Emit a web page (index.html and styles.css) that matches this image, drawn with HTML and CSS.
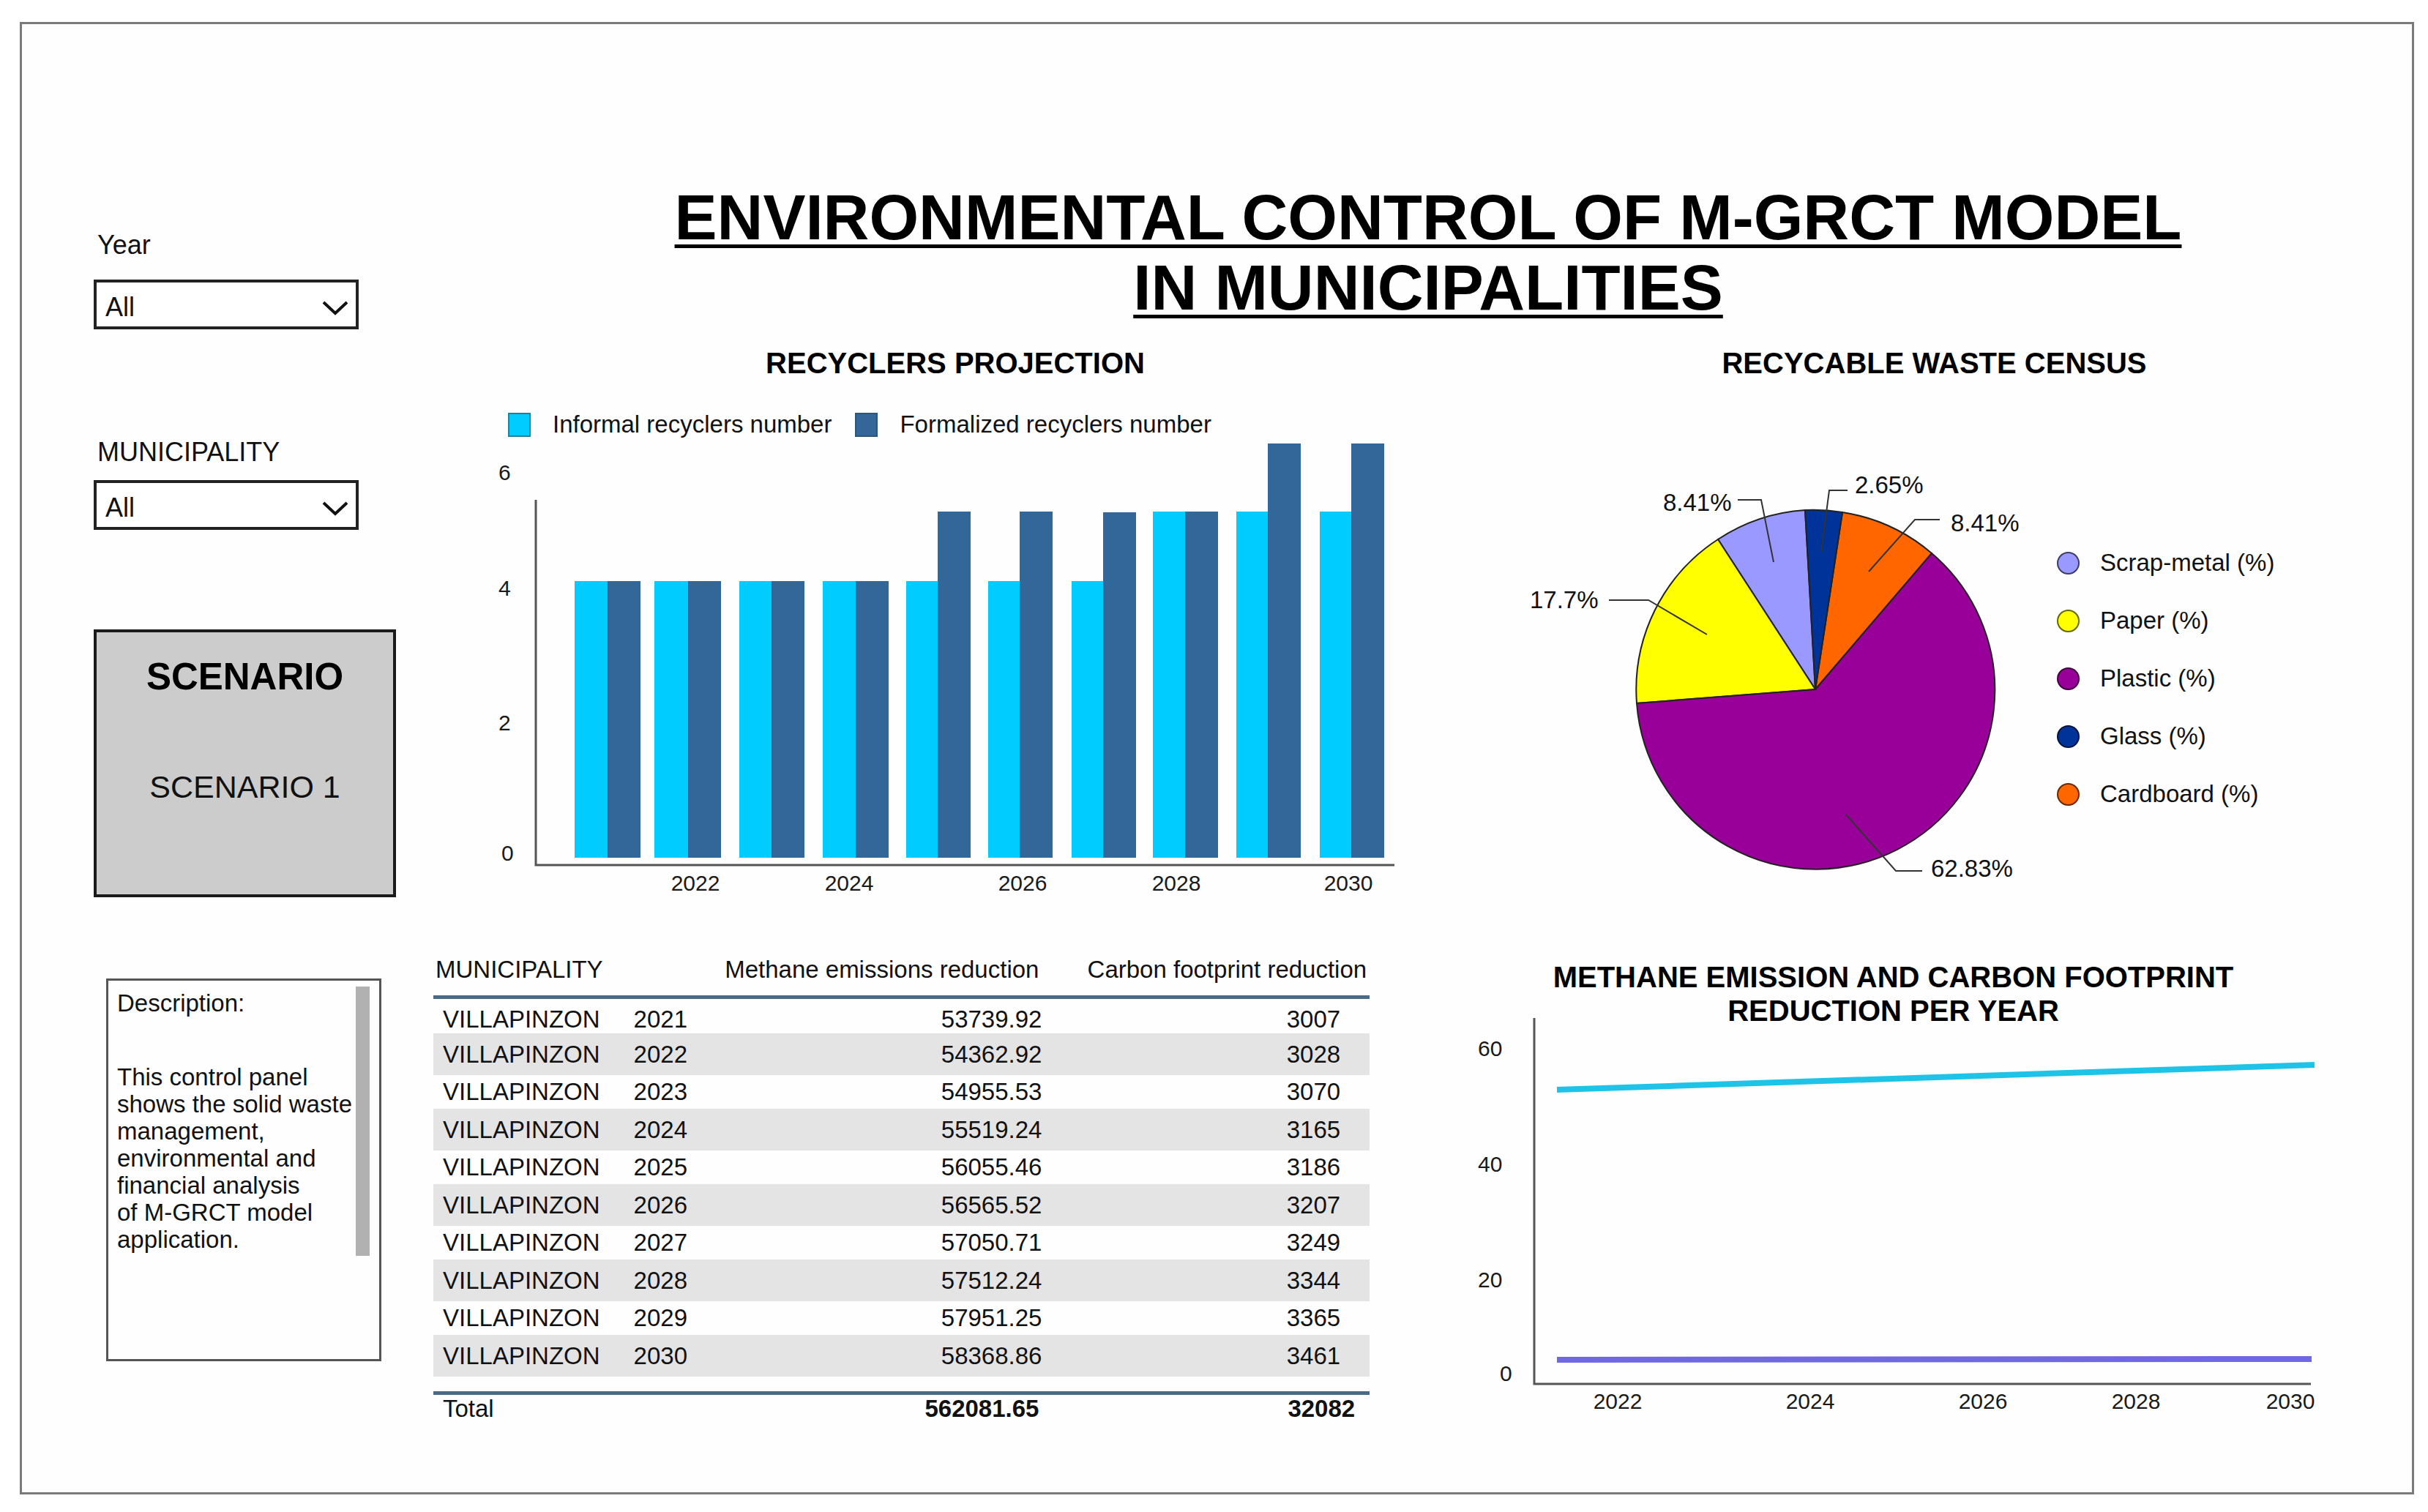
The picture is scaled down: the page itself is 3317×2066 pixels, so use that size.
FILE: index.html
```html
<!DOCTYPE html>
<html lang="en">
<head>
  <meta charset="UTF-8">
  <title>Environmental control of M-GRCT model</title>
  <link rel="stylesheet" href="styles.css">
</head>
<body>
  <main class="panel">
    <aside class="sidebar">
      <div class="filter filter-year">
        <label for="year">Year</label>
        <div class="select-box">
          <select id="year" name="year"><option>All</option></select>
          <svg class="chevron" viewBox="0 0 36 20"><path d="M2 2 L18 17 L34 2"/></svg>
        </div>
      </div>
      <div class="filter">
        <label for="municipality">MUNICIPALITY</label>
        <div class="select-box">
          <select id="municipality" name="municipality"><option>All</option></select>
          <svg class="chevron" viewBox="0 0 36 20"><path d="M2 2 L18 17 L34 2"/></svg>
        </div>
      </div>

      <section class="scenario">
        <h2>SCENARIO</h2>
        <p>SCENARIO 1</p>
      </section>

      <section class="description">
        <div class="description-text">
          <p>Description:</p>
          <p>This control panel shows the solid waste management, environmental and financial analysis<br>of M-GRCT model application.</p>
        </div>
        <div class="scroll-thumb"></div>
      </section>
    </aside>

    <h1>ENVIRONMENTAL CONTROL OF M-GRCT MODEL<br>IN MUNICIPALITIES</h1>

    <div class="column">
      <section class="recyclers">
        <h2>RECYCLERS PROJECTION</h2>
        <ul class="bar-legend">
          <li><span class="swatch informal"></span>Informal recyclers number</li>
          <li><span class="swatch formalized"></span>Formalized recyclers number</li>
        </ul>
        <svg class="chart" viewBox="0 0 1370 626">
          <g class="bar-informal">
            <rect x="165" y="195" width="45" height="378"/>
            <rect x="274" y="195" width="46" height="378"/>
            <rect x="390" y="195" width="44" height="378"/>
            <rect x="504" y="195" width="45" height="378"/>
            <rect x="618" y="195" width="44" height="378"/>
            <rect x="730" y="195" width="44" height="378"/>
            <rect x="844" y="195" width="44" height="378"/>
            <rect x="955" y="100" width="45" height="473"/>
            <rect x="1069" y="100" width="44" height="473"/>
            <rect x="1183" y="100" width="44" height="473"/>
          </g>
          <g class="bar-formalized">
            <rect x="210" y="195" width="45" height="378"/>
            <rect x="320" y="195" width="45" height="378"/>
            <rect x="434" y="195" width="45" height="378"/>
            <rect x="549" y="195" width="45" height="378"/>
            <rect x="661" y="100" width="45" height="473"/>
            <rect x="773" y="100" width="45" height="473"/>
            <rect x="887" y="101" width="45" height="472"/>
            <rect x="999" y="100" width="45" height="473"/>
            <rect x="1112" y="7" width="45" height="566"/>
            <rect x="1226" y="7" width="45" height="566"/>
          </g>
          <path class="axis" d="M112 84 V583 H1285"/>
          <g class="tick">
            <text x="61" y="57">6</text>
            <text x="61" y="215">4</text>
            <text x="61" y="399">2</text>
            <text x="65" y="577">0</text>
          </g>
          <g class="tick tick-x">
            <text x="330" y="618">2022</text>
            <text x="540" y="618">2024</text>
            <text x="777" y="618">2026</text>
            <text x="987" y="618">2028</text>
            <text x="1222" y="618">2030</text>
          </g>
        </svg>
      </section>

      <table class="reduction">
        <colgroup>
          <col class="col-name">
          <col class="col-year">
          <col class="col-methane">
          <col class="col-carbon">
        </colgroup>
        <thead>
          <tr><th>MUNICIPALITY</th><th></th><th>Methane emissions reduction</th><th>Carbon footprint reduction</th></tr>
        </thead>
        <tbody>
          <tr><td>VILLAPINZON</td><td>2021</td><td>53739.92</td><td>3007</td></tr>
          <tr><td>VILLAPINZON</td><td>2022</td><td>54362.92</td><td>3028</td></tr>
          <tr><td>VILLAPINZON</td><td>2023</td><td>54955.53</td><td>3070</td></tr>
          <tr><td>VILLAPINZON</td><td>2024</td><td>55519.24</td><td>3165</td></tr>
          <tr><td>VILLAPINZON</td><td>2025</td><td>56055.46</td><td>3186</td></tr>
          <tr><td>VILLAPINZON</td><td>2026</td><td>56565.52</td><td>3207</td></tr>
          <tr><td>VILLAPINZON</td><td>2027</td><td>57050.71</td><td>3249</td></tr>
          <tr><td>VILLAPINZON</td><td>2028</td><td>57512.24</td><td>3344</td></tr>
          <tr><td>VILLAPINZON</td><td>2029</td><td>57951.25</td><td>3365</td></tr>
          <tr><td>VILLAPINZON</td><td>2030</td><td>58368.86</td><td>3461</td></tr>
        </tbody>
        <tfoot>
          <tr><td>Total</td><td></td><td>562081.65</td><td>32082</td></tr>
        </tfoot>
      </table>
    </div>

    <div class="column">
      <section class="waste">
        <h2>RECYCABLE WASTE CENSUS</h2>
        <div class="pie">
          <svg class="chart" viewBox="0 0 820 580">
            <g class="slices">
              <path class="scrap" d="M490 302 L357 97 A245 245 0 0 1 476 57 Z"/>
              <path class="paper" d="M490 302 L246 321 A245 245 0 0 1 357 97 Z"/>
              <path class="cardboard" d="M490 302 L527 60 A245 245 0 0 1 649 116 Z"/>
              <path class="plastic" d="M490 302 L649 116 A245 245 0 1 1 246 321 Z"/>
              <path class="glass" d="M490 302 L476 57 A245 245 0 0 1 527 60 Z"/>
            </g>
            <g class="leaders">
              <path d="M384 43 H416 L433 128"/>
              <path d="M534 30 H509 L498 114"/>
              <path d="M660 70 H626 L563 141"/>
              <path d="M208 180 H262 L342 227"/>
              <path d="M532 473 L600 550 H636"/>
            </g>
            <g class="pie-label">
              <text x="282" y="58">8.41%</text>
              <text x="544" y="34">2.65%</text>
              <text x="675" y="86">8.41%</text>
              <text x="100" y="191">17.7%</text>
              <text x="648" y="558">62.83%</text>
            </g>
          </svg>
          <ul class="pie-legend">
            <li><span class="dot dot-scrap"></span>Scrap-metal (%)</li>
            <li><span class="dot dot-paper"></span>Paper (%)</li>
            <li><span class="dot dot-plastic"></span>Plastic (%)</li>
            <li><span class="dot dot-glass"></span>Glass (%)</li>
            <li><span class="dot dot-cardboard"></span>Cardboard (%)</li>
          </ul>
        </div>
      </section>

      <section class="emission">
        <h2>METHANE EMISSION AND CARBON FOOTPRINT<br>REDUCTION PER YEAR</h2>
        <svg class="chart" viewBox="0 0 1305 560">
          <path class="axis" d="M106 11 V511 H1167"/>
          <path class="line-methane" d="M137 109 L1172 75"/>
          <path class="line-carbon" d="M137 478 L1168 477"/>
          <g class="tick">
            <text x="29" y="63">60</text>
            <text x="29" y="221">40</text>
            <text x="29" y="379">20</text>
            <text x="59" y="507">0</text>
          </g>
          <g class="tick tick-x">
            <text x="220" y="545">2022</text>
            <text x="483" y="545">2024</text>
            <text x="719" y="545">2026</text>
            <text x="928" y="545">2028</text>
            <text x="1139" y="545">2030</text>
          </g>
        </svg>
      </section>
    </div>
  </main>
</body>
</html>
```

FILE: styles.css
```css
* {
  box-sizing: border-box;
}
body {
  margin: 0;
  background-color: #fff;
  color: #111;
  font-family: "Liberation Sans", Arial, sans-serif;
  font-size: 33px;
  line-height: 38px;
}
h1, h2, p, ul {
  margin: 0;
  padding: 0;
}
ul {
  list-style: none;
}
.panel {
  display: grid;
  grid-template-columns: minmax(0, 562fr) minmax(0, 1398fr) minmax(0, 1305fr);
  grid-template-rows: auto 1fr;
  min-height: calc(100vh - 54px);
  margin: 30px 19px 24px 27px;
  padding-top: 216px;
  border: 3px solid #7a7a7a;
  background-color: #fefefe;
}
h1 {
  grid-column: 2 / 4;
  padding-left: 15px;
  color: #000;
  font-size: 87px;
  line-height: 96px;
  text-align: center;
  text-decoration: underline;
  text-decoration-thickness: 5px;
  text-underline-offset: 7px;
  text-decoration-skip-ink: none;
}
h2 {
  color: #000;
  font-size: 40px;
  line-height: 46px;
  text-align: center;
}
.column {
  padding-top: 32px;
}
.chart {
  display: block;
  width: 100%;
  overflow: visible;
}

/* left side: filters, scenario and description */
.sidebar {
  grid-row: 1 / 3;
  padding: 65px 0 0 98px;
}
.filter {
  width: 78%;
  margin-bottom: 147px;
}
.filter label {
  display: block;
  margin-bottom: 17px;
  padding-left: 5px;
  font-size: 36px;
  line-height: 42px;
}
.filter-year label {
  margin-bottom: 26px;
}
.select-box {
  position: relative;
}
.select-box select {
  display: block;
  width: 100%;
  height: 68px;
  padding: 6px 12px 0;
  border: 4px solid #222;
  border-radius: 0;
  background-color: #fff;
  color: #111;
  font-family: inherit;
  font-size: 36px;
  appearance: none;
}
.chevron {
  position: absolute;
  top: 29px;
  right: 14px;
  width: 36px;
  height: 20px;
  fill: none;
  stroke: #111;
  stroke-width: 4;
  pointer-events: none;
}
.scenario {
  width: 89%;
  min-height: 366px;
  margin-top: -11px;
  padding-top: 32px;
  border: 4px solid #1a1a1a;
  background-color: #ccc;
  text-align: center;
}
.scenario h2 {
  font-size: 51px;
  line-height: 58px;
}
.scenario p {
  margin-top: 96px;
  font-size: 43px;
  line-height: 50px;
}
.description {
  display: flex;
  width: 81%;
  min-height: 523px;
  margin: 111px 0 0 17px;
  padding: 8px 13px 8px 12px;
  border: 3px solid #555;
  line-height: 37px;
}
.description-text {
  flex: 1;
  padding-top: 4px;
}
.description-text p + p {
  margin-top: 64px;
}
.scroll-thumb {
  width: 19px;
  height: 368px;
  background-color: #b1b1b1;
}

/* charts */
.axis {
  fill: none;
  stroke: #555;
  stroke-width: 3;
}
.tick {
  fill: #1a1a1a;
  font-size: 30px;
}
.tick-x {
  text-anchor: middle;
}
.recyclers {
  padding-left: 28px;
}
.bar-legend {
  display: flex;
  gap: 32px;
  margin: 42px 0 0 74px;
}
.bar-legend li {
  display: flex;
  align-items: center;
  gap: 30px;
}
.swatch {
  width: 31px;
  height: 33px;
  border: 2px solid #2b7d9c;
}
.informal {
  background-color: #0cf;
}
.formalized {
  border-color: #2d5678;
  background-color: #369;
}
.bar-informal {
  fill: #0cf;
}
.bar-formalized {
  fill: #369;
}
.pie {
  display: grid;
  grid-template-columns: 820fr 485fr;
  margin-top: 121px;
}
.slices {
  stroke: #222;
  stroke-width: 2;
}
.scrap {
  fill: #99f;
}
.paper {
  fill: #ff0;
}
.plastic {
  fill: #909;
}
.glass {
  fill: #039;
}
.cardboard {
  fill: #f60;
}
.leaders {
  fill: none;
  stroke: #333;
  stroke-width: 2;
}
.pie-label {
  fill: #111;
  font-size: 33px;
}
.pie-legend {
  display: flex;
  flex-direction: column;
  gap: 41px;
  padding-top: 110px;
}
.pie-legend li {
  display: flex;
  align-items: center;
  gap: 28px;
}
.dot {
  width: 31px;
  height: 31px;
  border: 2px solid rgba(0, 0, 0, 0.6);
  border-radius: 50%;
}
.dot-scrap {
  background-color: #99f;
}
.dot-paper {
  background-color: #ff0;
}
.dot-plastic {
  background-color: #909;
}
.dot-glass {
  background-color: #039;
}
.dot-cardboard {
  background-color: #f60;
}
.emission {
  margin-top: 92px;
}
.emission h2 {
  padding-right: 112px;
}
/* the axis starts beside the second line of the title */
.emission .chart {
  margin-top: -24px;
}
.line-methane {
  fill: none;
  stroke: #1fc3e8;
  stroke-width: 8;
}
.line-carbon {
  fill: none;
  stroke: #7068e0;
  stroke-width: 8;
}

/* table */
.reduction {
  width: 91.5%;
  margin-top: 81px;
  border-collapse: separate;
  border-spacing: 0;
  table-layout: fixed;
}
.col-name {
  width: 21%;
}
.col-year {
  width: 9%;
}
.col-methane {
  width: 35%;
}
.reduction th {
  padding: 0 4px 16px 3px;
  border-bottom: 5px solid #4a6a88;
  font-weight: normal;
  text-align: left;
  white-space: nowrap;
}
.reduction td {
  padding: 4px 0 4px 13px;
}
.reduction td:nth-child(2) {
  padding-left: 5px;
}
.reduction th:nth-child(n+3), .reduction td:nth-child(n+3) {
  text-align: right;
}
.reduction td:nth-child(4) {
  padding-right: 40px;
}
.reduction tbody tr:first-child td {
  padding-top: 9px;
  padding-bottom: 0;
}
.reduction tbody tr:nth-child(even) td {
  padding-top: 10px;
  padding-bottom: 9px;
  background-color: #e4e4e4;
}
.reduction tbody::after {
  content: "";
  display: table-row;
  height: 20px;
}
.reduction tfoot td {
  padding-top: 0;
  border-top: 5px solid #4a6a88;
}
.reduction tfoot td:nth-child(n+3) {
  padding-right: 4px;
  font-weight: bold;
}
.reduction tfoot td:nth-child(4) {
  padding-right: 20px;
}
```
